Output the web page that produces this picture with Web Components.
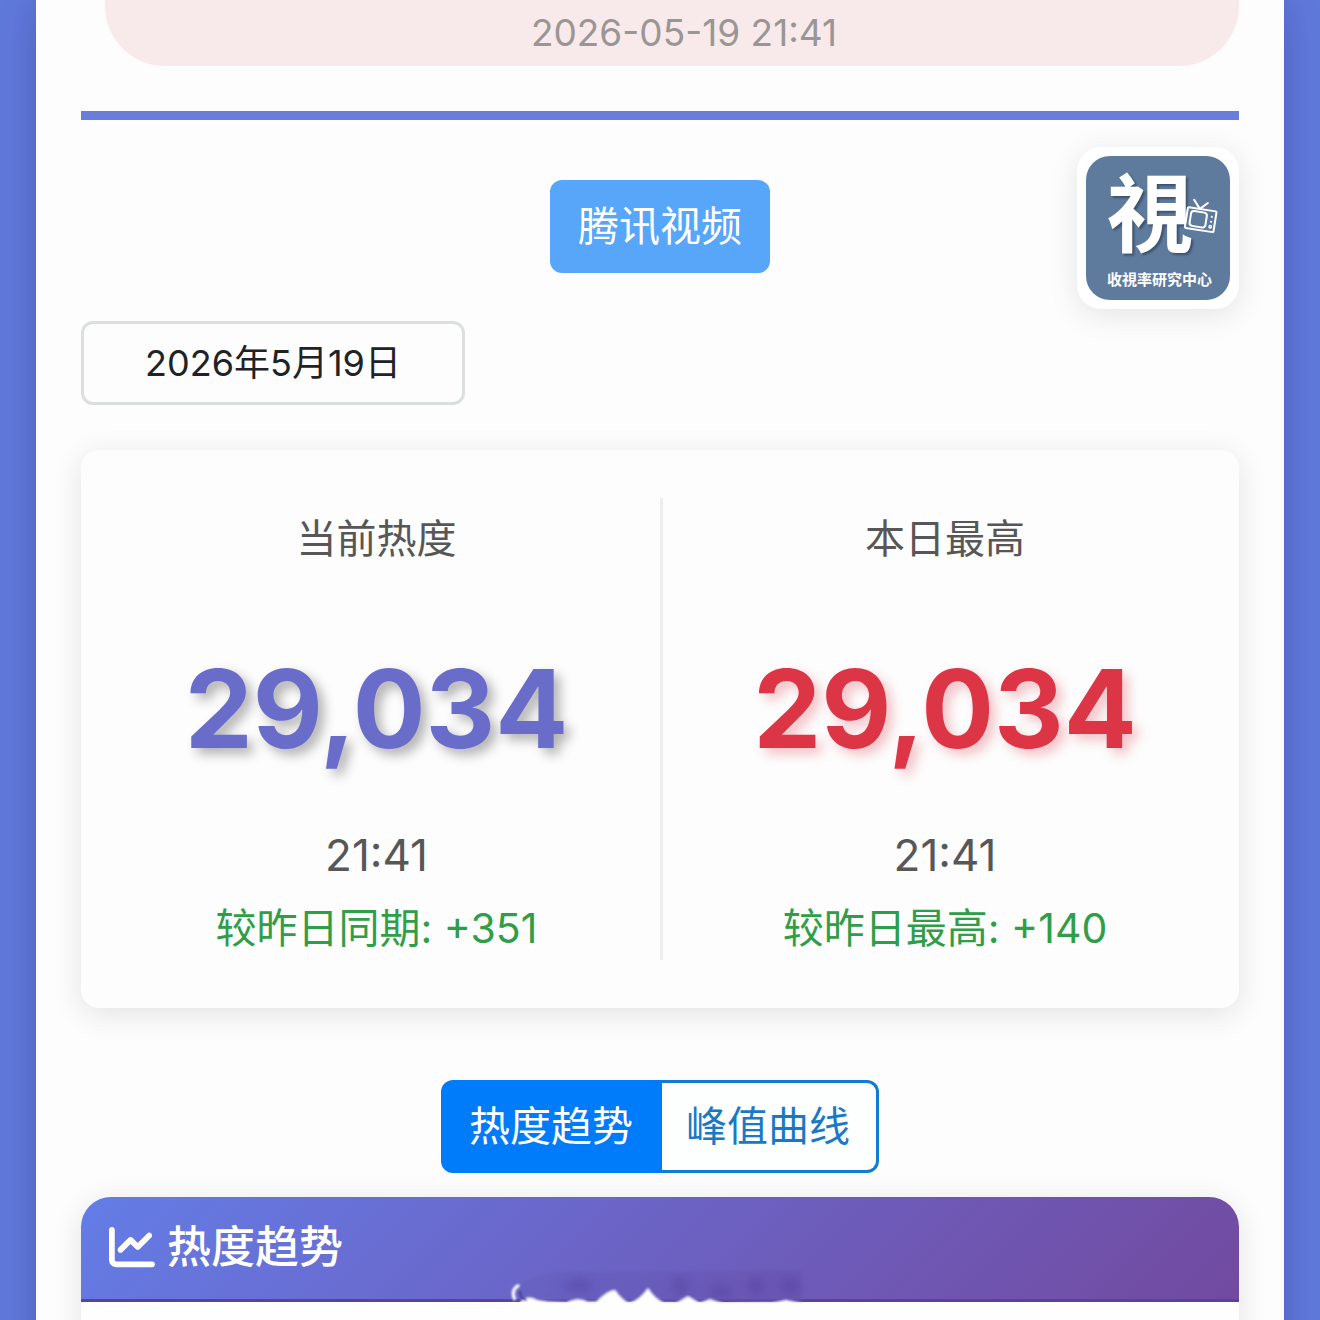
<!DOCTYPE html>
<html lang="zh-CN">
<head>
<meta charset="utf-8">
<title>热度趋势</title>
<style>
  html { background: #607adc; }
  body {
    margin: 0;
    min-height: 100vh;
    display: flex;
    overflow: hidden;
    font-family: Inter, "Noto Sans CJK SC", sans-serif;
    color: #212529;
  }
</style>
</head>
<body>
<heat-page></heat-page>

<script>
const define = (name, html) => {
  const template = document.createElement('template');
  template.innerHTML = html;
  customElements.define(name, class extends HTMLElement {
    constructor() {
      super();
      this.attachShadow({ mode: 'open' }).append(template.content.cloneNode(true));
    }
  });
};

define('update-note', `
  <style>
    :host {
      display: block;
      box-sizing: border-box;
      height: 66px;
      margin-left: 24px;
      padding: 9px 0 9px 24px;
      border-radius: 0 0 60px 60px;
      background: #f8eaea;
      color: #9b9696;
      font-size: 37px;
      line-height: 48px;
      text-align: center;
    }
  </style>
  <slot></slot>`);

define('platform-badge', `
  <style>
    :host { display: block; }
    button {
      display: block;
      height: 93px;
      padding: 0 28px 2px;
      border: 0;
      border-radius: 12px;
      background: #57a6f9;
      color: #fff;
      font: inherit;
      font-size: 41px;
      line-height: 60px;
    }
  </style>
  <button type="button"><slot></slot></button>`);

define('brand-logo', `
  <style>
    :host {
      display: block;
      box-sizing: border-box;
      width: 162px;
      padding: 9px;
      border-radius: 24px;
      background: #fff;
      box-shadow: 0 6px 30px rgba(0, 0, 0, .1);
    }
    svg { display: block; width: 100%; overflow: visible; }
    text { font-family: "Noto Sans CJK TC", sans-serif; font-weight: 700; fill: #fff; }
    .mark { font-size: 86px; filter: drop-shadow(2px 2px 1px #3c506c); }
    .name { font-size: 15px; }
  </style>
  <svg viewBox="0 0 144 144" role="img" aria-label="收視率研究中心">
    <rect width="144" height="144" rx="24" fill="#5e7b9d"/>
    <text class="mark" x="21" y="90">視</text>
    <g transform="translate(102 51) rotate(9)" stroke="#fff" fill="none" stroke-width="2" stroke-linejoin="round" stroke-linecap="round">
      <rect x="0" y="0" width="29" height="21" rx="1" fill="#5e7b9d"/>
      <rect x="4" y="3" width="16" height="15" rx="3"/>
      <path d="M5-8l7 8 7-7"/>
      <path d="M25 6h.1M25 11h.1"/>
      <circle cx="25" cy="16" r="1.200" stroke-width="1.500"/>
    </g>
    <text class="name" x="21" y="129">收視率研究中心</text>
  </svg>`);

define('date-field', `
  <style>
    :host { display: block; }
    input {
      display: block;
      box-sizing: border-box;
      width: 384px;
      max-width: 100%;
      height: 84px;
      padding: 0 2px 7px;
      border: 3px solid #dcdfdf;
      border-radius: 12px;
      background: #fdfdfe;
      color: #212226;
      font: inherit;
      font-size: 36px;
      text-align: center;
    }
  </style>
  <input type="text" aria-label="日期" value="2026年5月19日">`);

define('heat-stat', `
  <style>
    :host {
      display: flex;
      flex-direction: column;
      align-items: center;
      padding: 11px 0 2px;
      line-height: 60px;
      color: #575757;
    }
    .label { font-size: 40px; }
    .value {
      margin: 74px 0 50px;
      font-size: 108px;
      font-weight: 700;
      line-height: 132px;
      color: var(--value-color);
      text-shadow: 6px 6px 12px var(--value-shadow);
    }
    .time { font-size: 44px; }
    .delta { margin-top: 13px; font-size: 41px; color: #309e49; }
  </style>
  <div class="label"><slot name="label"></slot></div>
  <div class="value"><slot name="value"></slot></div>
  <div class="time"><slot name="time"></slot></div>
  <div class="delta"><slot name="delta"></slot></div>`);

define('stat-card', `
  <style>
    :host {
      display: grid;
      grid-template-columns: 1fr 1fr;
      padding: 48px 12px;
      border-radius: 18px;
      background: #fdfdfd;
      box-shadow: 0 6px 30px rgba(0, 0, 0, .11);
    }
    ::slotted(*) { min-width: 0; }
    ::slotted(:first-child) { --value-color: #6a6cca; --value-shadow: rgba(0, 0, 0, .3); }
    ::slotted(:last-child) { --value-color: #dc3545; --value-shadow: rgba(220, 53, 69, .3); border-left: 3px solid #eee; }
  </style>
  <slot></slot>`);

define('chart-tabs', `
  <style>
    :host { display: flex; justify-content: center; }
    button {
      box-sizing: border-box;
      height: 93px;
      padding: 0 26px 2px 24px;
      border: 3px solid #127bd2;
      border-left: 0;
      border-radius: 0 12px 12px 0;
      background: #fdfefe;
      color: #1b79c4;
      font: inherit;
      font-size: 41px;
      line-height: 60px;
    }
    button[aria-pressed="true"] {
      padding: 0 29px 2px 28px;
      border: 0;
      border-radius: 12px 0 0 12px;
      background: #007bfa;
      color: #fff;
    }
  </style>
  <button type="button" aria-pressed="true">热度趋势</button>
  <button type="button" aria-pressed="false">峰值曲线</button>`);

define('chart-panel', `
  <style>
    :host {
      display: block;
      position: relative;
      min-height: 180px;
      border-radius: 30px;
      background: #fefefe;
      box-shadow: 0 6px 30px rgba(0, 0, 0, .11);
    }
    header {
      display: flex;
      align-items: center;
      gap: 12px;
      box-sizing: border-box;
      height: 105px;
      padding: 0 28px 2px;
      border-bottom: 3px solid #594397;
      border-radius: 30px 30px 0 0;
      background: linear-gradient(135deg, #637de6, #6a69cd 35%, #724aa0);
      color: #fff;
    }
    h2 { margin: 0; font-size: 44px; font-weight: 500; line-height: 60px; }
    .icon { width: 46px; height: 46px; flex: none; }
    .smudge { position: absolute; left: 50%; top: 69px; width: 300px; height: 42px; margin-left: -150px; }
  </style>
  <header>
    <svg class="icon" viewBox="0 0 512 512" fill="#fff" aria-hidden="true"><path d="M64 64c0-17.700-14.300-32-32-32S0 46.300 0 64v336c0 44.200 35.800 80 80 80h400c17.700 0 32-14.300 32-32s-14.300-32-32-32H80c-8.800 0-16-7.200-16-16V64zm406.600 86.600c12.500-12.500 12.500-32.800 0-45.300s-32.800-12.500-45.300 0L320 210.700l-57.400-57.300c-12.500-12.500-32.800-12.500-45.300 0l-112 112c-12.500 12.500-12.500 32.800 0 45.300s32.800 12.500 45.300 0L240 221.300l57.400 57.300c12.500 12.500 32.800 12.500 45.300 0l128-128z"/></svg>
    <h2><slot name="title"></slot></h2>
  </header>
  <svg class="smudge" viewBox="0 0 300 42" aria-hidden="true">
    <defs>
      <filter id="soft"><feGaussianBlur stdDeviation="4"/></filter>
      <filter id="edge"><feGaussianBlur stdDeviation="1"/></filter>
      <linearGradient id="tone"><stop stop-color="#6660c0"/><stop offset="1" stop-color="#6852ae"/></linearGradient>
    </defs>
    <g filter="url(#edge)">
      <path d="M6 22Q28 2 80 6L292 4V36H40Q10 36 6 26z" fill="url(#tone)" opacity=".6"/>
      <path d="M10 42V36Q18 28 27 34L39 36L56 37Q68 30 78 36L86 36Q98 24 105 24Q112 34 119 37Q130 34 138 22Q144 32 154 37H166L178 30Q184 34 190 37L200 33L215 38L262 37L276 34L290 37L294 42z" fill="#fefefe"/>
      <path d="M5 34Q0 24 9 19" fill="none" stroke="#fff" stroke-width="3"/>
      <path d="M10 25Q10 34 17 34" fill="none" stroke="#443b82" stroke-width="2"/>
    </g>
    <g filter="url(#soft)" fill="#53419d" opacity=".4">
      <ellipse cx="68" cy="20" rx="15" ry="7"/><ellipse cx="170" cy="20" rx="8" ry="10"/>
      <ellipse cx="211" cy="26" rx="12" ry="7"/><ellipse cx="246" cy="20" rx="9" ry="9"/>
      <ellipse cx="280" cy="20" rx="10" ry="9"/>
    </g>
  </svg>`);

define('heat-page', `
  <style>
    :host { display: block; flex: 1; min-width: 0; height: 100vh; overflow: hidden; }
    main {
      box-sizing: border-box;
      min-height: 100%;
      margin: 0 36px;
      padding: 0 45px;
      background: #fdfdfe;
      box-shadow: 0 0 40px rgba(40, 40, 110, .3);
    }
    .heading {
      display: grid;
      grid-template-columns: 1fr auto 1fr;
      align-items: start;
      margin-top: 45px;
      padding: 27px 0 12px;
      border-top: 9px solid #6a7ddb;
    }
    platform-badge { grid-column: 2; margin-top: 33px; }
    brand-logo { justify-self: end; }
    stat-card { margin: 45px 0 72px; }
    chart-panel { margin-top: 24px; }
  </style>
  <main>
    <update-note>2026-05-19 21:41</update-note>
    <section class="heading">
      <platform-badge>腾讯视频</platform-badge>
      <brand-logo></brand-logo>
    </section>
    <date-field></date-field>
    <stat-card>
      <heat-stat>
        <span slot="label">当前热度</span>
        <span slot="value">29,034</span>
        <span slot="time">21:41</span>
        <span slot="delta">较昨日同期: +351</span>
      </heat-stat>
      <heat-stat>
        <span slot="label">本日最高</span>
        <span slot="value">29,034</span>
        <span slot="time">21:41</span>
        <span slot="delta">较昨日最高: +140</span>
      </heat-stat>
    </stat-card>
    <chart-tabs></chart-tabs>
    <chart-panel><span slot="title">热度趋势</span></chart-panel>
  </main>`);
</script>
</body>
</html>
